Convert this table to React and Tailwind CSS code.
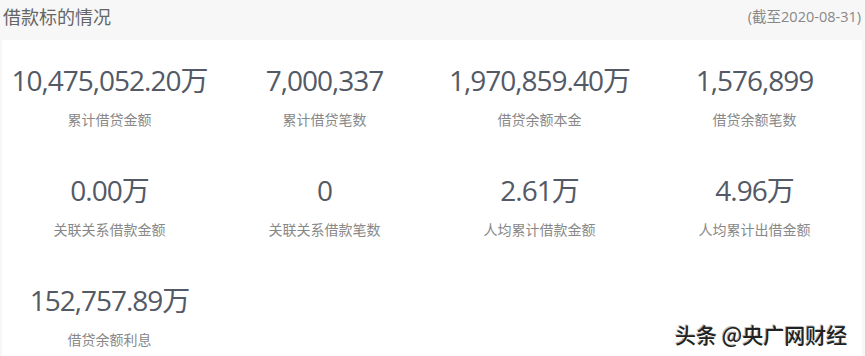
const stats = [
  { value: "10,475,052.20万", label: "累计借贷金额" },
  { value: "7,000,337", label: "累计借贷笔数" },
  { value: "1,970,859.40万", label: "借贷余额本金" },
  { value: "1,576,899", label: "借贷余额笔数" },
  { value: "0.00万", label: "关联关系借款金额" },
  { value: "0", label: "关联关系借款笔数" },
  { value: "2.61万", label: "人均累计借款金额" },
  { value: "4.96万", label: "人均累计出借金额" },
  { value: "152,757.89万", label: "借贷余额利息" },
];

const font = {
  fontFamily: '"Open Sans", "Noto Sans CJK SC", sans-serif',
};

export default function App() {
  return (
    <div
      className="relative w-[865px] h-[356px] overflow-hidden bg-[#f7f7f7]"
      style={font}
    >
      <div className="flex items-center justify-between h-[40px] pl-[3px] pr-[4px] pb-[6px]">
        <h2 className="text-[18px] text-[#666] font-normal">借款标的情况</h2>
        <span className="text-[14.5px] text-[#888]">(截至2020-08-31)</span>
      </div>

      <div className="ml-[2px] w-[860px] h-[316px] bg-white grid grid-cols-4 pt-[20px] content-start">
        {stats.map((s) => (
          <div key={s.label} className="flex flex-col items-center h-[110px]">
            <div className="text-[28px] leading-[40px] text-[#535965] tracking-[-1px]">
              {s.value}
            </div>
            <div className="mt-[10px] text-[14px] leading-[20px] text-[#888]">
              {s.label}
            </div>
          </div>
        ))}
      </div>

      <div
        className="absolute left-[675px] top-[320px] text-[21px] font-medium text-[#222] leading-[28px]"
        style={{
          fontFamily: '"Noto Sans CJK SC", sans-serif',
          textShadow: "1px 1px 0 #fff, -1px -1px 0 #bbb",
        }}
      >
        头条 @央广网财经
      </div>
    </div>
  );
}
